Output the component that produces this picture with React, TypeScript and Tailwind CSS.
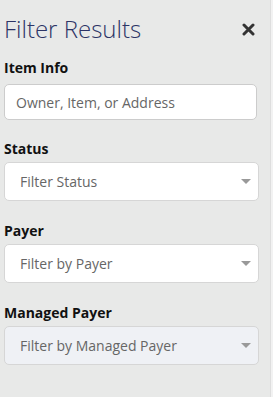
import React from "react";

const Caret = () => (
  <svg width="10" height="5" viewBox="0 0 10 5" className="shrink-0">
    <path d="M0 0 L10 0 L5 5 Z" fill="#999999" />
  </svg>
);

function Select({ text, disabled }: { text: string; disabled?: boolean }) {
  return (
    <div
      className={`flex items-center justify-between h-[39px] w-[255px] rounded-[5px] border border-[#d6d6d6] pl-[15px] pr-[7px] ${
        disabled ? "bg-[#eff1f5]" : "bg-white"
      }`}
    >
      <span className="text-[14px] text-[#666666]">{text}</span>
      <Caret />
    </div>
  );
}

export default function App() {
  return (
    <div
      className="flex w-[273px] h-[397px] bg-[#e8e9e8]"
      style={{ fontFamily: '"Open Sans", sans-serif' }}
    >
      <div className="flex-1 pl-[4px] pt-[12px]">
        <div className="flex items-center justify-between pr-[15px]">
          <h1 className="text-[24px] font-light text-[#2c3466] leading-[34px]">Filter Results</h1>
          <svg width="13" height="13" viewBox="0 0 13 13">
            <path d="M2 2 L11 11 M11 2 L2 11" stroke="#333333" strokeWidth="3" strokeLinecap="round" />
          </svg>
        </div>
        <div className="mt-[12px] text-[14px] font-bold text-[#111111] leading-[20px]">Item Info</div>
        <div className="mt-[6px] flex items-center h-[36px] w-[253px] rounded-[5px] border border-[#cccccc] bg-white pl-[11px]">
          <span className="text-[14px] text-[#666666]">Owner, Item, or Address</span>
        </div>
        <div className="mt-[19px] text-[14px] font-bold text-[#111111] leading-[20px]">Status</div>
        <div className="mt-[3px]">
          <Select text="Filter Status" />
        </div>
        <div className="mt-[20px] text-[14px] font-bold text-[#111111] leading-[20px]">Payer</div>
        <div className="mt-[3px]">
          <Select text="Filter by Payer" />
        </div>
        <div className="mt-[20px] text-[14px] font-bold text-[#111111] leading-[20px]">Managed Payer</div>
        <div className="mt-[3px]">
          <Select text="Filter by Managed Payer" disabled />
        </div>
      </div>
      <div className="w-[3px] border-l border-[#dedede] bg-[#f2f2f2]" />
    </div>
  );
}
